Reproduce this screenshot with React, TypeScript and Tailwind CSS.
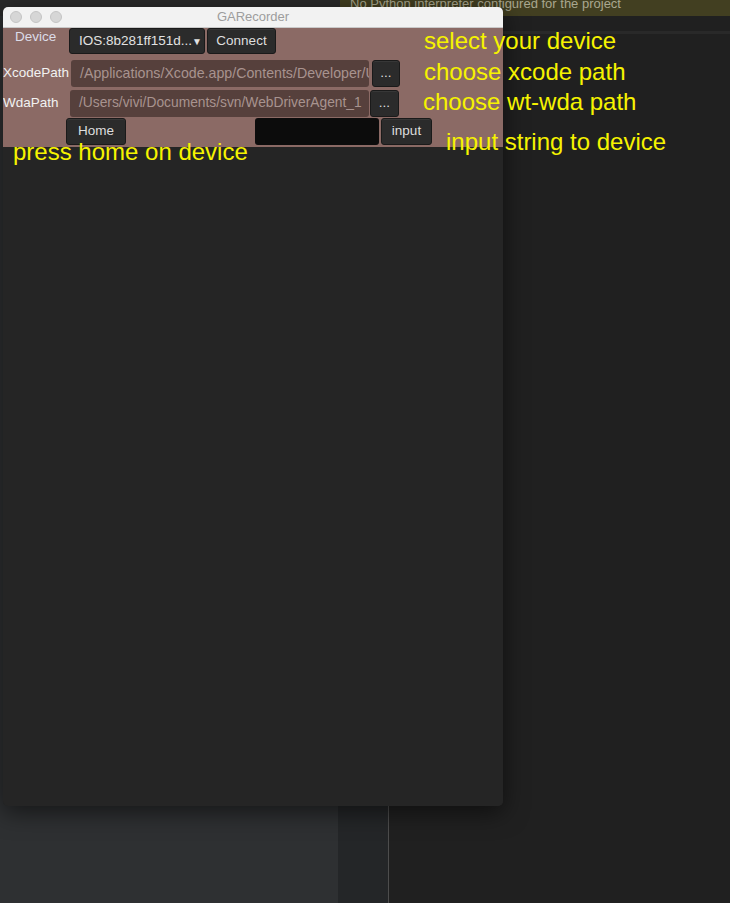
import React from "react";

const font = { fontFamily: '"Liberation Sans", Arial, sans-serif' };

function Btn({ w, label, className = "" }: { w: string; label: string; className?: string }) {
  return (
    <div
      className={`${w} h-full shrink-0 rounded-[3px] border border-[#1a1a1a] bg-[#2b2b2b] flex items-center justify-center text-[13.5px] text-[#dedede] shadow-[inset_0_1px_0_rgba(255,255,255,0.06)] ${className}`}
    >
      {label}
    </div>
  );
}

export default function App() {
  return (
    <div className="relative w-[730px] h-[903px] overflow-hidden bg-[#1f1f1f] flex flex-col" style={font}>
      {/* IDE background */}
      <div className="h-[16px] flex shrink-0">
        <div className="w-[340px] bg-[#2a2a2a]" />
        <div className="flex-1 bg-[#423f21] overflow-hidden pl-[10px]">
          <div className="text-[13px] leading-[16px] -mt-[4px] text-[#a9a78f] whitespace-nowrap">
            No Python interpreter configured for the project
          </div>
        </div>
      </div>
      <div className="flex-1 flex">
        <div className="w-[338px] bg-[#2e3032]" />
        <div className="w-[51px] bg-[#242628] border-r border-[#4d4d4d]" />
        <div className="flex-1 bg-[#202020] flex flex-col">
          <div className="h-[15px]" />
          <div className="h-[3px] bg-[#292929]" />
        </div>
      </div>

      {/* GARecorder window */}
      <div className="absolute left-[3px] top-[7px] w-[500px] h-[799px] rounded-[5px] overflow-hidden bg-[#252525] shadow-[0_6px_24px_rgba(0,0,0,0.55)] flex flex-col">
        <div className="h-[21px] shrink-0 bg-[#f2f2f2] border-b border-[#c9c9c9] grid grid-cols-[1fr_auto_1fr] items-center">
          <div className="flex gap-[8px] pl-[7px]">
            <div className="w-[12px] h-[12px] rounded-full bg-[#d6d6d6] border border-[#c4c4c4]" />
            <div className="w-[12px] h-[12px] rounded-full bg-[#d6d6d6] border border-[#c4c4c4]" />
            <div className="w-[12px] h-[12px] rounded-full bg-[#d6d6d6] border border-[#c4c4c4]" />
          </div>
          <div className="text-[13px] text-[#9d9d9d]">GARecorder</div>
          <div />
        </div>

        <div className="h-[119px] shrink-0 bg-[#8b6a65] flex flex-col">
          {/* Row 1 */}
          <div className="h-[26px] flex">
            <div className="w-[66px] pl-[12px] pt-[1px] text-[13.5px] leading-[15px] text-[#dcdce8]">Device</div>
            <div className="w-[136px] h-full shrink-0 rounded-[3px] border border-[#1a1a1a] bg-[#2b2b2b] flex items-center pl-[9px] text-[13.5px] text-[#e2e2e2] whitespace-nowrap">
              <span>IOS:8b281ff151d...</span>
              <span className="text-[10px] mt-[1px]">▼</span>
            </div>
            <Btn w="w-[69px]" label="Connect" className="ml-[2px]" />
          </div>
          {/* Row 2 */}
          <div className="h-[27px] mt-[6px] flex">
            <div className="w-[68px] flex items-center text-[13.5px] text-[#f2f2f2]">XcodePath</div>
            <div className="w-[298px] h-full rounded-[3px] bg-[#56403c] flex items-center pl-[9px] overflow-hidden whitespace-nowrap text-[14.2px] text-[#a8938f]">
              /Applications/Xcode.app/Contents/Developer/Usr
            </div>
            <Btn w="w-[28px]" label="..." className="ml-[3px]" />
          </div>
          {/* Row 3 */}
          <div className="h-[27px] mt-[3px] flex">
            <div className="w-[67px] flex items-center text-[13.5px] text-[#f2f2f2]">WdaPath</div>
            <div className="w-[299px] h-full rounded-[3px] bg-[#56403c] flex items-center pl-[9px] overflow-hidden whitespace-nowrap text-[13.8px] text-[#a8938f]">
              /Users/vivi/Documents/svn/WebDriverAgent_1
            </div>
            <Btn w="w-[29px]" label="..." className="ml-[1px]" />
          </div>
          {/* Row 4 */}
          <div className="h-[27px] mt-[1px] flex">
            <Btn w="w-[60px]" label="Home" className="ml-[63px]" />
            <div className="w-[124px] h-full ml-[129px] rounded-[3px] bg-[#0c0c0c]" />
            <Btn w="w-[51px]" label="input" className="ml-[2px]" />
          </div>
        </div>
        <div className="flex-1 bg-[#252525]" />
      </div>

      {/* Yellow annotations laid over the screenshot */}
      <div className="absolute left-[424px] top-[29px] text-[24px] leading-[24px] text-[#f6f300] whitespace-nowrap">select your device</div>
      <div className="absolute left-[424px] top-[60px] text-[24px] leading-[24px] text-[#f6f300] whitespace-nowrap">choose xcode path</div>
      <div className="absolute left-[423px] top-[90px] text-[24px] leading-[24px] text-[#f6f300] whitespace-nowrap">choose wt-wda path</div>
      <div className="absolute left-[446px] top-[130px] text-[24px] leading-[24px] text-[#f6f300] whitespace-nowrap">input string to device</div>
      <div className="absolute left-[13px] top-[140px] text-[24px] leading-[24px] text-[#f6f300] whitespace-nowrap">press home on device</div>
    </div>
  );
}
